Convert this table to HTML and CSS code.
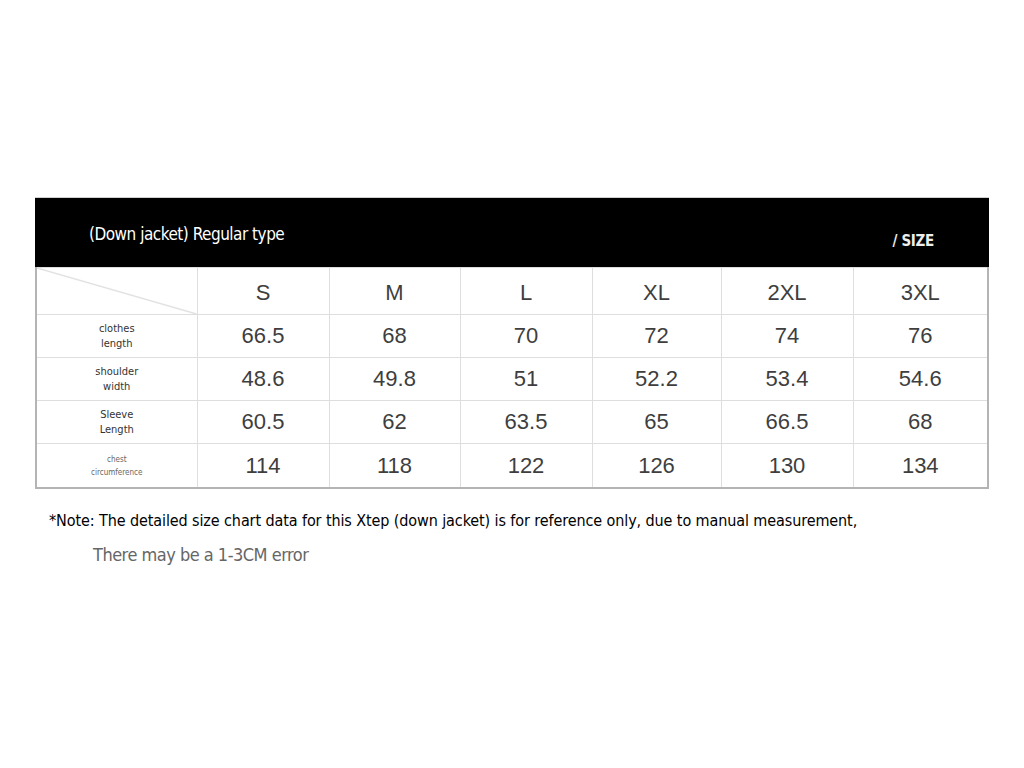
FILE: index.html
```html
<!DOCTYPE html>
<html>
<head>
<meta charset="utf-8">
<link rel="stylesheet" href="styles.css">
</head>
<body>
<div class="chart">
  <div class="chart-head">
    <span class="title">(Down jacket) Regular type</span>
    <span class="size">/ SIZE</span>
  </div>
  <table class="grid">
    <colgroup>
      <col style="width:161px"><col style="width:132px"><col style="width:131px"><col style="width:132px"><col style="width:129px"><col style="width:132px"><col>
    </colgroup>
    <tr class="r-head">
      <td class="corner"><svg class="diag" viewBox="0 0 161 47" preserveAspectRatio="none"><line x1="0" y1="0" x2="161" y2="47" stroke="#e2e2e2" stroke-width="1.5"/></svg></td>
      <td>S</td><td>M</td><td>L</td><td>XL</td><td>2XL</td><td>3XL</td>
    </tr>
    <tr class="r1">
      <td class="lab">clothes<br>length</td>
      <td>66.5</td><td>68</td><td>70</td><td>72</td><td>74</td><td>76</td>
    </tr>
    <tr class="r2">
      <td class="lab">shoulder<br>width</td>
      <td>48.6</td><td>49.8</td><td>51</td><td>52.2</td><td>53.4</td><td>54.6</td>
    </tr>
    <tr class="r3">
      <td class="lab">Sleeve<br>Length</td>
      <td>60.5</td><td>62</td><td>63.5</td><td>65</td><td>66.5</td><td>68</td>
    </tr>
    <tr class="r4">
      <td class="lab small">chest<br>circumference</td>
      <td>114</td><td>118</td><td>122</td><td>126</td><td>130</td><td>134</td>
    </tr>
  </table>
  <p class="note">*Note: The detailed size chart data for this Xtep (down jacket) is for reference only, due to manual measurement,</p>
  <p class="note2">There may be a 1-3CM error</p>
</div>
</body>
</html>
```
FILE: styles.css
```css
html, body {
  margin: 0;
  background: #fff;
}
.chart {
  margin: 198px 0 0 35px;
  width: 954px;
}
.chart-head {
  background: #000;
  height: 69px;
  box-sizing: border-box;
  display: flex;
  justify-content: space-between;
  align-items: flex-start;
  padding: 26px 55px 0 54px;
  color: #fff;
  font-family: "DejaVu Sans Condensed", "Liberation Sans Narrow", "DejaVu Sans", sans-serif;
  font-stretch: condensed;
  box-shadow: 0 -1px 0 #d0d0d0;
}
.title {
  font-size: 17px;
  letter-spacing: -0.5px;
}
.size {
  font-size: 15px;
  font-weight: bold;
  margin-top: 8px;
  letter-spacing: -0.3px;
  color: #eee;
}
.grid {
  width: 954px;
  border-collapse: collapse;
  table-layout: fixed;
  border: 2px solid #b4b4b4;
  border-top: none;
  font-family: "Liberation Sans", Arial, sans-serif;
  font-size: 22px;
  color: #3e3e3e;
}
.grid td {
  border: 1px solid #dedede;
  text-align: center;
  padding: 0;
}
.r-head td { height: 43px; padding-top: 3px; }
.r1 td, .r2 td, .r3 td { height: 42px; }
.r4 td { height: 43px; }
.corner {
  position: relative;
}
.diag {
  position: absolute;
  left: 0;
  top: 0;
  width: 100%;
  height: 100%;
}
.grid td.lab {
  font-family: "DejaVu Sans Condensed", "Liberation Sans Narrow", "DejaVu Sans", sans-serif;
  font-stretch: condensed;
  font-size: 11px;
  line-height: 15px;
  color: #333;
}
.grid td.lab.small {
  font-size: 8px;
  line-height: 13px;
  color: #666;
}
.note {
  margin: 22px 0 0 14px;
  font-family: "DejaVu Sans Condensed", "Liberation Sans Narrow", "DejaVu Sans", sans-serif;
  font-stretch: condensed;
  font-size: 16px;
  letter-spacing: -0.1px;
  color: #000;
  white-space: nowrap;
}
.note2 {
  margin: 14px 0 0 58px;
  font-family: "DejaVu Sans Condensed", "Liberation Sans Narrow", "DejaVu Sans", sans-serif;
  font-stretch: condensed;
  font-size: 18px;
  letter-spacing: -0.5px;
  color: #666;
}
```
